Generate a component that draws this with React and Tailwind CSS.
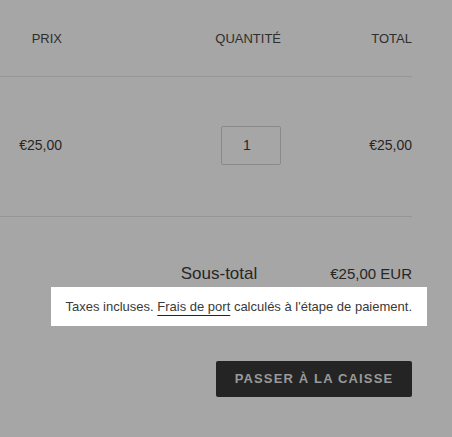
export default function App() {
  return (
    <div className="w-[452px] h-[437px] bg-[#a6a6a6] overflow-hidden text-[#262626]" style={{ fontFamily: '"Liberation Sans", Arial, sans-serif' }}>
      <div className="w-[412px]">
        <div className="grid grid-cols-[62px_1fr_131px] text-[13px] leading-[20px] text-[#2e2e2e] pt-[29px] pb-[27px] border-b border-[#969696]">
          <div className="text-right">PRIX</div>
          <div className="text-right">QUANTITÉ</div>
          <div className="text-right">TOTAL</div>
        </div>
        <div className="grid grid-cols-[62px_1fr_131px] items-center text-[14px] pt-[49px] pb-[51px] border-b border-[#969696]">
          <div className="text-right">€25,00</div>
          <div className="flex justify-end">
            <div className="w-[60px] h-[39px] border border-[#8a8a8a] rounded-[2px] flex items-center pl-[21px] text-[14px]">1</div>
          </div>
          <div className="text-right">€25,00</div>
        </div>
        <div className="flex justify-end items-baseline pt-[46px] mb-[2px]">
          <span className="text-[17px] leading-[22px]">Sous-total</span>
          <span className="text-[15px] leading-[22px] ml-[73px]">€25,00 EUR</span>
        </div>
        <div className="flex justify-end -mr-[15px]">
          <div className="w-[376px] h-[39px] bg-white flex items-center justify-end pr-[15px] text-[13px] text-[#3a3a3a]">
            <span>
              Taxes incluses.{" "}
              <span className="underline decoration-[#222] underline-offset-[4px]">Frais de port</span>{" "}
              calculés à l'étape de paiement.
            </span>
          </div>
        </div>
        <div className="flex justify-end pt-[35px]">
          <div className="w-[196px] h-[36px] bg-[#242424] rounded-[2px] flex items-center justify-center text-[#9a9a9a] font-bold text-[13px] tracking-[1.15px]">
            PASSER À LA CAISSE
          </div>
        </div>
      </div>
    </div>
  );
}
